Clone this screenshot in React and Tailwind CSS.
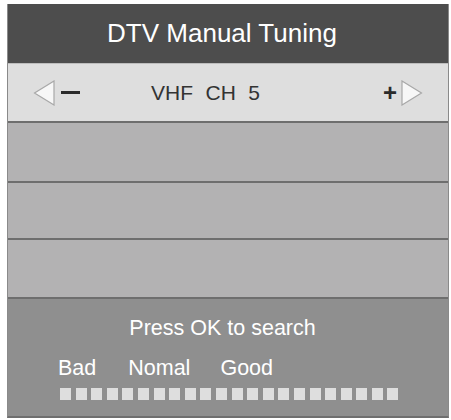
export default function App() {
  const bars = Array.from({ length: 22 })

  return (
    <div className="w-[451px] h-[420px] bg-white pt-[4px] pl-[7px] font-['Liberation_Sans',Arial,sans-serif]">
      <div className="w-[442px] h-[414px] flex flex-col border-l border-r border-[#8a8a8a] border-b-2 border-b-[#6f6f6f]">
        <div className="h-[59px] bg-[#4d4d4d] flex items-center justify-center pr-[12px]">
          <span className="text-[26px] text-white leading-none pb-[1px]">DTV Manual Tuning</span>
        </div>

        <div className="h-[58px] bg-[#dedede] border-t border-[#bdbdbd] flex items-center px-[25px]">
          <svg width="23" height="26" viewBox="0 0 23 26">
            <polygon points="21,1 21,25 1.5,13" fill="#f7f7f7" stroke="#a8a8a8" strokeWidth="1.2" />
          </svg>
          <div className="w-[19px] h-[3px] bg-[#2b2b2b] ml-[5px]" />
          <div className="flex-1 flex gap-[12.5px] text-[21px] text-[#333333] leading-none pl-[71px]">
            <span>VHF</span>
            <span>CH</span>
            <span>5</span>
          </div>
          <span className="text-[24px] font-bold text-[#2b2b2b] leading-none">+</span>
          <svg width="23" height="26" viewBox="0 0 23 26" className="ml-[3px]">
            <polygon points="2,1 2,25 21.5,13" fill="#f7f7f7" stroke="#a8a8a8" strokeWidth="1.2" />
          </svg>
        </div>

        <div className="h-[60px] bg-[#b3b2b3] border-t-2 border-[#6e6e6e]" />
        <div className="h-[57px] bg-[#b3b2b3] border-t-2 border-[#6e6e6e]" />
        <div className="h-[59px] bg-[#b3b2b3] border-t-2 border-[#6e6e6e]" />

        <div className="flex-1 bg-[#8f8f8f] border-t-2 border-[#6e6e6e] flex flex-col">
          <div className="text-center text-white text-[21.5px] leading-none mt-[19px] pr-[11px]">Press OK to search</div>
          <div className="flex text-white text-[21.5px] leading-none mt-[18px] pl-[50px]">
            <span>Bad</span>
            <span className="ml-[32px]">Nomal</span>
            <span className="ml-[30px]">Good</span>
          </div>
          <div className="flex gap-[4.6px] mt-[9px] pl-[52px]">
            {bars.map((_, i) => (
              <div key={i} className="w-[11px] h-[12px] bg-[#dedede]" />
            ))}
          </div>
        </div>
      </div>
    </div>
  )
}
